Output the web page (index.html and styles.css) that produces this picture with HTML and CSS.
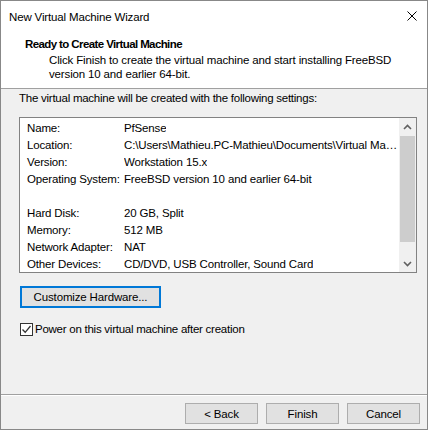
FILE: index.html
```html
<!DOCTYPE html>
<html lang="en">
<head>
    <meta charset="UTF-8">
    <meta name="viewport" content="width=device-width, initial-scale=1.0">
    <title>New Virtual Machine Wizard</title>
    <link rel="stylesheet" href="styles.css">
</head>
<body>
    <div class="window">

        <div class="titlebar">
            <span class="title">New Virtual Machine Wizard</span>
            <svg class="close" width="10" height="10" viewBox="0 0 10 10">
                <path d="M0.5 0.5 L9.5 9.5 M9.5 0.5 L0.5 9.5" stroke="#000" stroke-width="1" fill="none"/>
            </svg>
        </div>

        <div class="header">
            <h1>Ready to Create Virtual Machine</h1>
            <p>Click Finish to create the virtual machine and start installing FreeBSD<br>version 10 and earlier 64-bit.</p>
        </div>

        <div class="main">
            <p class="intro">The virtual machine will be created with the following settings:</p>

            <div class="listbox">
                <div class="rows">
                    <div class="row"><span class="label">Name:</span><span class="value">PfSense</span></div>
                    <div class="row"><span class="label">Location:</span><span class="value">C:\Users\Mathieu.PC-Mathieu\Documents\Virtual Ma…</span></div>
                    <div class="row"><span class="label">Version:</span><span class="value">Workstation 15.x</span></div>
                    <div class="row"><span class="label">Operating System:</span><span class="value">FreeBSD version 10 and earlier 64-bit</span></div>
                    <div class="row"></div>
                    <div class="row"><span class="label">Hard Disk:</span><span class="value">20 GB, Split</span></div>
                    <div class="row"><span class="label">Memory:</span><span class="value">512 MB</span></div>
                    <div class="row"><span class="label">Network Adapter:</span><span class="value">NAT</span></div>
                    <div class="row"><span class="label">Other Devices:</span><span class="value">CD/DVD, USB Controller, Sound Card</span></div>
                </div>
                <div class="scrollbar">
                    <div class="arrow">
                        <svg width="9" height="6" viewBox="0 0 9 6"><path d="M1 5 L4.5 1.5 L8 5" stroke="#606060" stroke-width="1.6" fill="none"/></svg>
                    </div>
                    <div class="track"><div class="thumb"></div></div>
                    <div class="arrow">
                        <svg width="9" height="6" viewBox="0 0 9 6"><path d="M1 1 L4.5 4.5 L8 1" stroke="#606060" stroke-width="1.6" fill="none"/></svg>
                    </div>
                </div>
            </div>

            <button class="btn btn-default">Customize Hardware...</button>

            <label class="check">
                <span class="box">
                    <svg width="11" height="11" viewBox="0 0 11 11"><path d="M1.5 5.5 L4.2 8.3 L9.5 2" stroke="#333" stroke-width="1.3" fill="none"/></svg>
                </span>
                Power on this virtual machine after creation
            </label>
        </div>

        <div class="footer">
            <button class="btn">&lt; Back</button>
            <button class="btn">Finish</button>
            <button class="btn">Cancel</button>
        </div>

    </div>
</body>
</html>
```

FILE: styles.css
```css
body{
    margin: 0;
    font-family: "Segoe UI", "Liberation Sans", Arial, sans-serif;
    font-size: 11.5px;
    letter-spacing: -0.15px;
    color: #000;
}

.window{
    width: 428px;
    height: 430px;
    box-sizing: border-box;
    border: 1px solid #888;
    background-color: #f0f0f0;
    display: flex;
    flex-direction: column;
}

.titlebar{
    height: 30px;
    background-color: #fff;
    display: flex;
    align-items: center;
    justify-content: space-between;
    padding: 0 10px 0 8px;
}

.title{
    margin-top: 1px;
}

.close{
    margin-top: -1px;
}

.header{
    height: 58px;
    box-sizing: border-box;
    background-color: #fff;
    border-bottom: 1px solid #a0a0a0;
    padding: 6px 0 0 24px;
}

.header h1{
    margin: 0;
    font-size: 11.5px;
    font-weight: bold;
    letter-spacing: -0.6px;
    line-height: 14px;
}

.header p{
    margin: 2px 0 0 24px;
    line-height: 14px;
}

.main{
    flex: 1;
    padding: 2px 0 0 18px;
}

.intro{
    margin: 0;
    line-height: 14px;
    letter-spacing: -0.25px;
}

.listbox{
    margin-top: 12px;
    width: 398px;
    height: 156px;
    box-sizing: border-box;
    border: 1px solid #828282;
    background-color: #fff;
    display: flex;
}

.rows{
    flex: 1;
    padding: 2px 0 0 7px;
    overflow: hidden;
}

.row{
    height: 17px;
    line-height: 17px;
    display: flex;
    white-space: nowrap;
}

.label{
    width: 97px;
    flex-shrink: 0;
}

.value{
    overflow: hidden;
}

.scrollbar{
    width: 17px;
    background-color: #f0f0f0;
    display: flex;
    flex-direction: column;
}

.arrow{
    height: 17px;
    display: flex;
    align-items: center;
    justify-content: center;
}

.track{
    flex: 1;
}

.thumb{
    height: 106px;
    margin: 1px 1px 0 1px;
    background-color: #cdcdcd;
}

.btn{
    font-family: inherit;
    font-size: 11.5px;
    letter-spacing: -0.15px;
    color: #000;
    background-color: #e1e1e1;
    border: 1px solid #adadad;
    padding: 0;
    margin: 0;
    height: 21px;
    width: 73px;
}

.btn-default{
    display: block;
    margin: 13px 0 0 1px;
    width: 141px;
    height: 22px;
    border: 2px solid #0078d7;
}

.check{
    margin: 14px 0 0 1px;
    display: flex;
    align-items: center;
    line-height: 14px;
    letter-spacing: -0.25px;
}

.box{
    width: 13px;
    height: 13px;
    box-sizing: border-box;
    border: 1px solid #333;
    background-color: #fff;
    display: flex;
    align-items: center;
    justify-content: center;
    margin-right: 2px;
}

.footer{
    border-top: 1px solid #a0a0a0;
    box-shadow: inset 0 1px 0 #fff;
    padding: 8px 7px 5px 0;
    display: flex;
    justify-content: flex-end;
    gap: 8px;
}
```
